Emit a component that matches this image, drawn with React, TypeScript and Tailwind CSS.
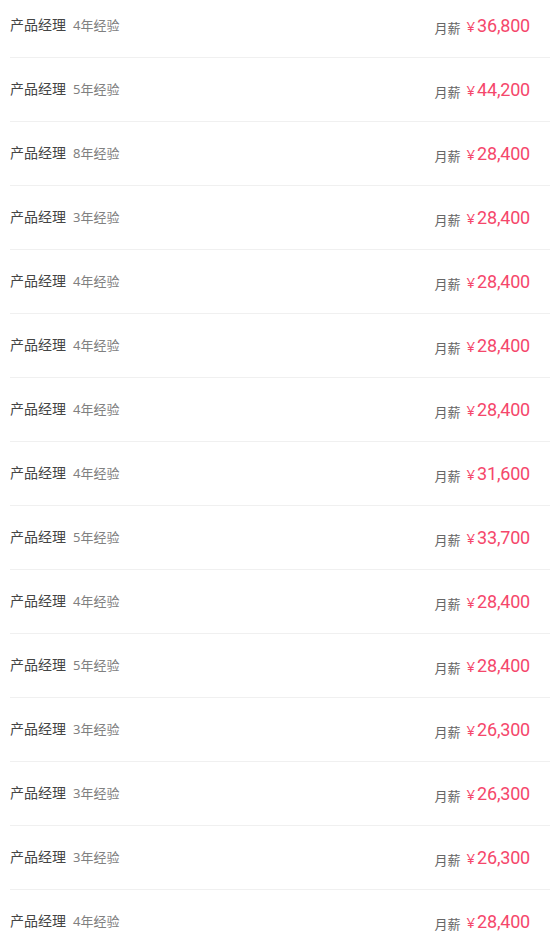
const rows = [
  { title: "产品经理", exp: "4年经验", salary: "36,800" },
  { title: "产品经理", exp: "5年经验", salary: "44,200" },
  { title: "产品经理", exp: "8年经验", salary: "28,400" },
  { title: "产品经理", exp: "3年经验", salary: "28,400" },
  { title: "产品经理", exp: "4年经验", salary: "28,400" },
  { title: "产品经理", exp: "4年经验", salary: "28,400" },
  { title: "产品经理", exp: "4年经验", salary: "28,400" },
  { title: "产品经理", exp: "4年经验", salary: "31,600" },
  { title: "产品经理", exp: "5年经验", salary: "33,700" },
  { title: "产品经理", exp: "4年经验", salary: "28,400" },
  { title: "产品经理", exp: "5年经验", salary: "28,400" },
  { title: "产品经理", exp: "3年经验", salary: "26,300" },
  { title: "产品经理", exp: "3年经验", salary: "26,300" },
  { title: "产品经理", exp: "3年经验", salary: "26,300" },
  { title: "产品经理", exp: "4年经验", salary: "28,400" },
];

export default function App() {
  return (
    <div
      className="w-[550px] h-[946px] overflow-hidden bg-white pl-[10px]"
      style={{ fontFamily: '"Noto Sans", "Noto Sans CJK SC", sans-serif' }}
    >
      <div className="-mt-[6px]">
        {rows.map((row, i) => (
          <div
            key={i}
            className="flex h-[64px] items-center justify-between border-b border-[#f0f0f0] pr-[20px]"
          >
            <div className="flex items-baseline gap-[7px] -mt-[1px]">
              <span className="text-[14px] text-[#444]">{row.title}</span>
              <span className="text-[13px] text-[#808080]">{row.exp}</span>
            </div>
            <div className="flex items-baseline gap-[6px]">
              <span className="text-[13px] text-[#666] relative top-[1px]">月薪</span>
              <span className="text-[#f5476b]">
                <span className="text-[15px] mr-[2px]">¥</span>
                <span className="text-[18px] tracking-[-0.2px]" style={{ fontFamily: "Roboto, sans-serif" }}>
                  {row.salary}
                </span>
              </span>
            </div>
          </div>
        ))}
      </div>
    </div>
  );
}
